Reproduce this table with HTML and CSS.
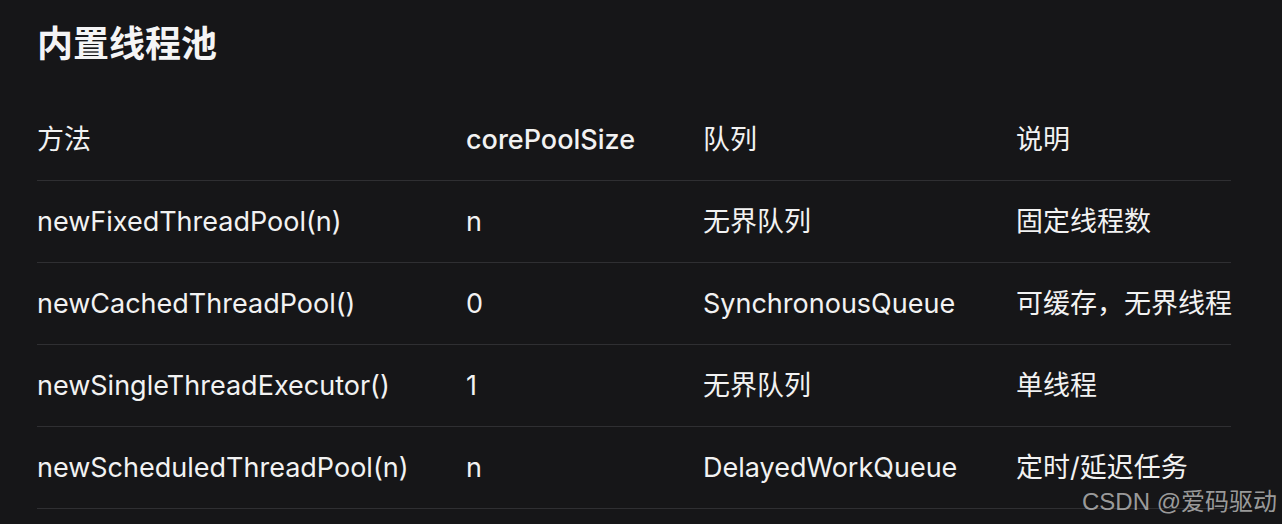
FILE: index.html
```html
<!DOCTYPE html>
<html lang="zh-CN">
<head>
<meta charset="utf-8">
<title>内置线程池</title>
<link rel="stylesheet" href="styles.css">
</head>
<body>
<main class="page">
  <h1 class="title">内置线程池</h1>
  <table class="pool-table">
    <colgroup>
      <col class="c1"><col class="c2"><col class="c3"><col class="c4">
    </colgroup>
    <thead>
      <tr><th class="cjk">方法</th><th>corePoolSize</th><th class="cjk">队列</th><th class="cjk">说明</th></tr>
    </thead>
    <tbody>
      <tr><td>newFixedThreadPool(n)</td><td>n</td><td>无界队列</td><td>固定线程数</td></tr>
      <tr><td>newCachedThreadPool()</td><td>0</td><td>SynchronousQueue</td><td>可缓存，无界线程</td></tr>
      <tr><td>newSingleThreadExecutor()</td><td>1</td><td>无界队列</td><td>单线程</td></tr>
      <tr><td>newScheduledThreadPool(n)</td><td>n</td><td>DelayedWorkQueue</td><td>定时/延迟任务</td></tr>
    </tbody>
  </table>
</main>
<div class="watermark">CSDN @爱码驱动</div>
</body>
</html>
```

FILE: styles.css
```css
html, body {
  margin: 0;
  padding: 0;
  background: #161618;
  height: 100%;
  overflow: hidden;
}
body {
  font-family: Inter, "Noto Sans CJK SC", sans-serif;
  color: #f2f2f2;
  position: relative;
}
.page {
  padding: 17px 0 0 37px;
}
.title {
  margin: 0;
  font-size: 36px;
  line-height: 54px;
  font-weight: 700;
  color: #f4f4f5;
}
.pool-table {
  margin-top: 28px;
  width: 1194px;
  border-collapse: collapse;
  table-layout: fixed;
  font-size: 27px;
}
.c1 { width: 429px; }
.c2 { width: 237px; }
.c3 { width: 313px; }
.c4 { width: 215px; }
.pool-table th,
.pool-table td {
  padding: 0;
  height: 81px;
  text-align: left;
  vertical-align: middle;
  white-space: nowrap;
  border-bottom: 1px solid #2f2f32;
  line-height: 1.3;
}
.pool-table th {
  font-weight: 500;
}
.pool-table th.cjk {
  font-weight: 400;
}
.pool-table td {
  font-weight: 400;
}
.watermark {
  position: absolute;
  right: 5px;
  bottom: 9px;
  font-family: "Liberation Sans", "Noto Sans CJK SC", sans-serif;
  font-size: 24px;
  line-height: 1.1;
  color: rgba(190, 190, 190, 0.8);
}
```
